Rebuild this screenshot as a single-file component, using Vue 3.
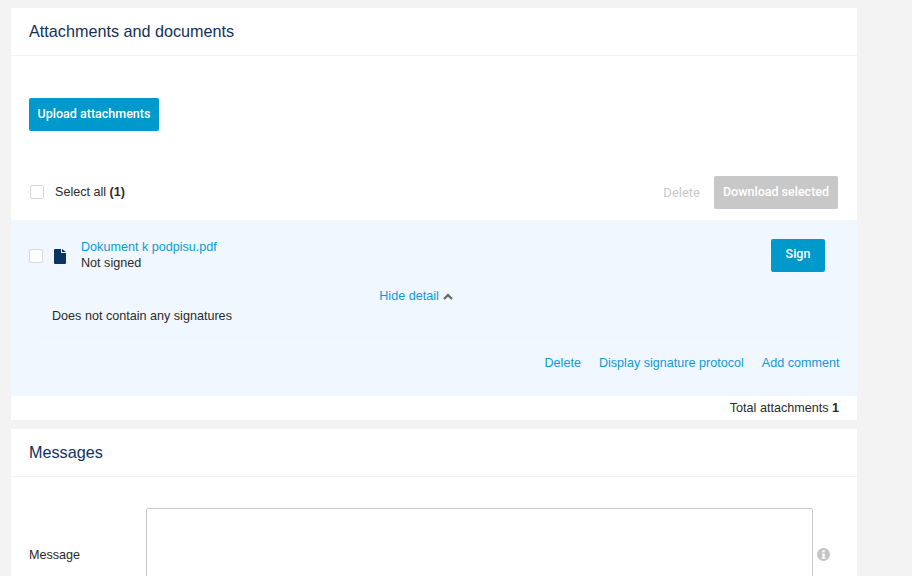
<script setup>
const actions = ['Delete', 'Display signature protocol', 'Add comment']
</script>

<template>
  <div class="page">
    <section class="card first">
      <h2 class="head">Attachments and documents</h2>
      <div class="upload-wrap">
        <button class="btn primary upload">Upload attachments</button>
      </div>
      <div class="select-row">
        <label class="select-all">
          <span class="check"></span>
          <span>Select all <b>(1)</b></span>
        </label>
        <div class="bulk">
          <span class="muted">Delete</span>
          <button class="btn disabled">Download selected</button>
        </div>
      </div>
      <div class="item">
        <div class="item-main">
          <span class="check"></span>
          <svg class="file" viewBox="0 0 12 15" width="12" height="15">
            <path d="M1 0H7V4H12V14a1 1 0 0 1-1 1H1a1 1 0 0 1-1-1V1a1 1 0 0 1 1-1ZM8 0L12 3H8Z" fill="#0c3462" />
          </svg>
          <div class="names">
            <a class="link">Dokument k podpisu.pdf</a>
            <span>Not signed</span>
          </div>
          <button class="btn primary sign">Sign</button>
        </div>
        <div class="toggle">
          <a class="link">Hide detail</a>
          <svg viewBox="0 0 10 7" width="10" height="7">
            <path d="M1 6L5 2L9 6" fill="none" stroke="#5f6770" stroke-width="2.2" />
          </svg>
        </div>
        <p class="detail">Does not contain any signatures</p>
        <div class="actions">
          <a v-for="a in actions" :key="a" class="link">{{ a }}</a>
        </div>
      </div>
      <div class="total">Total attachments <b>1</b></div>
    </section>
    <section class="card second">
      <h2 class="head">Messages</h2>
      <div class="message-row">
        <span class="msg-label">Message</span>
        <div class="textarea"></div>
        <svg class="info" viewBox="0 0 14 14" width="13" height="13">
          <circle cx="7" cy="7" r="7" fill="#c4c4c4" />
          <rect x="5.9" y="2.4" width="2.4" height="2.2" fill="#fff" />
          <path d="M5 5.8H8.3V10.3H9.2V11.5H5V10.3H5.9V7H5Z" fill="#fff" />
        </svg>
      </div>
    </section>
  </div>
</template>

<style>
html, body { margin: 0; background: #f3f3f3; }
</style>

<style scoped>
.page {
  width: 912px;
  height: 576px;
  overflow: hidden;
  box-sizing: border-box;
  padding: 8px 0 0 11px;
  font-family: Arial, "Liberation Sans", sans-serif;
  font-size: 12.6px;
  color: #2b2b2b;
}
.card { width: 846px; background: #fff; }
.first { height: 412px; display: flex; flex-direction: column; }
.second { margin-top: 9px; height: 200px; }
.head {
  margin: 0;
  height: 47px;
  padding-left: 18px;
  font-size: 16.2px;
  font-weight: 400;
  line-height: 46px;
  color: #12315c;
  border-bottom: 1px solid #f2f2f2;
}
.upload-wrap { padding: 42px 0 0 18px; }
.btn {
  border: 0;
  border-radius: 2px;
  font-family: Roboto, sans-serif;
  font-size: 12.5px;
  font-weight: 500;
  color: #fff;
  padding: 0 0 3px;
}
.primary { background: #0099cc; }
.upload { width: 130px; height: 33px; display: block; }
.select-row {
  margin-top: 45px;
  height: 44px;
  padding: 0 19px;
  display: flex;
  align-items: flex-start;
  justify-content: space-between;
}
.select-all { display: flex; align-items: center; gap: 11px; height: 31px; }
.check {
  width: 12px;
  height: 12px;
  background: #fff;
  border: 1px solid #d8d8d8;
  border-radius: 2px;
  display: block;
  flex: none;
}
.bulk { display: flex; align-items: center; gap: 14px; }
.muted { color: #c8c8c8; font-family: Roboto, sans-serif; font-size: 13px; }
.disabled { background: #c8c8c8; width: 124px; height: 33px; }
.item {
  background: #f0f7fe;
  height: 176px;
  display: flex;
  flex-direction: column;
}
.item-main {
  height: 70px;
  padding: 0 32px 0 18px;
  display: flex;
  align-items: center;
}
.item-main .check { margin-top: 2px; }
.file { margin: 2px 0 0 11px; flex: none; }
.names {
  margin-left: 15px;
  display: flex;
  flex-direction: column;
  line-height: 16px;
  flex: 1;
}
.link { color: #0f9ad6; }
.sign { width: 54px; height: 33px; }
.toggle {
  height: 20px;
  margin-top: -4px;
  padding-right: 36px;
  display: flex;
  align-items: center;
  justify-content: center;
  gap: 4px;
}
.detail {
  margin: 0 12px 0 29px;
  height: 31px;
  padding: 1px 0 0 12px;
  box-sizing: border-box;
  line-height: 18px;
  border-bottom: 1px solid #eef5fb;
}
.actions {
  margin-top: 18.5px;
  padding-right: 17.5px;
  display: flex;
  justify-content: flex-end;
  gap: 18px;
}
.total { text-align: right; padding: 5px 18px 0 0; }
.message-row {
  position: relative;
  padding: 31px 0 0 18px;
  display: flex;
}
.msg-label { width: 117px; padding-top: 40px; }
.textarea {
  width: 665px;
  height: 160px;
  border: 1px solid #c8c8c8;
  border-radius: 2px;
}
.info { margin: 40px 0 0 4px; }
</style>
